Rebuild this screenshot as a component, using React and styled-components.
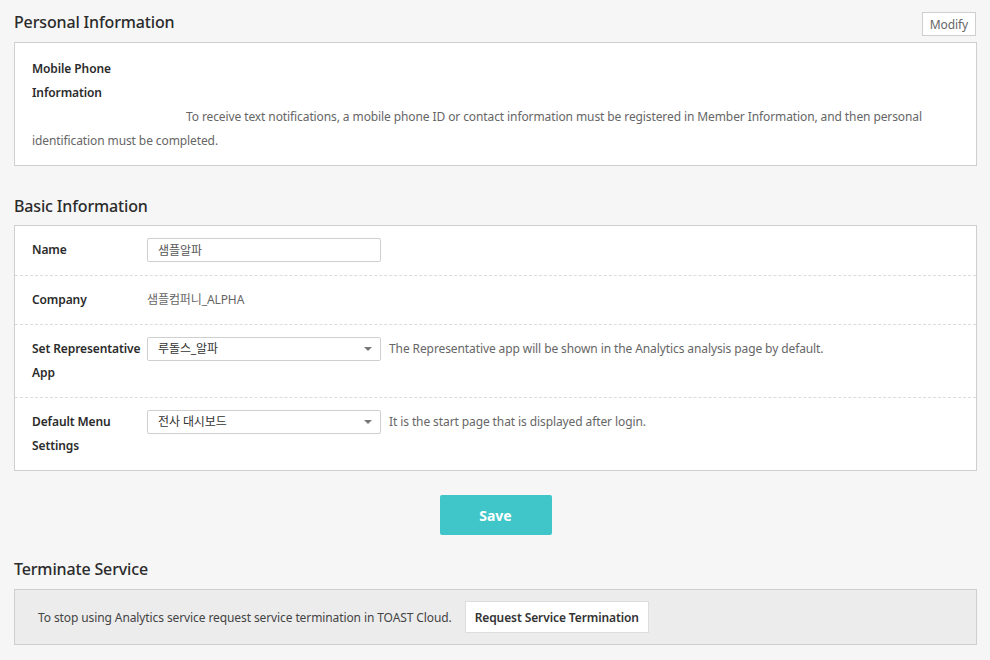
import React from "react";
import styled, { createGlobalStyle } from "styled-components";

const Global = createGlobalStyle`
  html, body { margin: 0; padding: 0; background: #f6f6f6; }
  body {
    font-family: "Noto Sans", "Noto Sans CJK KR", sans-serif;
    color: #333;
    font-size: 12px;
    letter-spacing: -0.1px;
  }
  * { box-sizing: border-box; }
`;

const Page = styled.div`
  width: 990px;
  height: 660px;
  padding: 0 13px 0 14px;
  overflow: hidden;
`;

const SectionHead = styled.div`
  display: flex;
  align-items: flex-end;
  justify-content: space-between;
  height: ${(p) => p.$h}px;
  padding-bottom: ${(p) => p.$pb}px;
`;

const Title = styled.h2`
  margin: 0;
  font-size: 16px;
  font-weight: 500;
  color: #2b2b2b;
  line-height: 20px;
  letter-spacing: -0.15px;
`;

const SmallButton = styled.button`
  height: 24px;
  padding: 0 7px;
  background: #fff;
  border: 1px solid #cfcfcf;
  color: #666;
  font-family: inherit;
  font-size: 12px;
  letter-spacing: -0.1px;
  margin-right: 1px;
  margin-bottom: -4px;
`;

const Panel = styled.div`
  background: ${(p) => p.$bg || "#fff"};
  border: 1px solid #cfcfcf;
`;

const InfoBody = styled.div`
  padding: 14px 17px 12px 17px;
  line-height: 24px;
`;

const InfoLabel = styled.div`
  font-weight: 600;
  color: #2b2b2b;
  width: 110px;
`;

const InfoText = styled.p`
  margin: 0;
  text-indent: 154px;
  color: #666;
`;

const Row = styled.div`
  display: flex;
  align-items: flex-start;
  min-height: ${(p) => p.$h}px;
  padding: ${(p) => p.$pt}px 17px 0;
  border-top: ${(p) => (p.$first ? "none" : "1px dashed #dcdcdc")};
  line-height: 24px;
`;

const Label = styled.div`
  width: 115px;
  flex: none;
  font-weight: 600;
  color: #2b2b2b;
`;

const Input = styled.input`
  width: 234px;
  height: 24px;
  border: 1px solid #cfcfcf;
  border-radius: 2px;
  padding: 0 10px;
  font-family: inherit;
  font-size: 12px;
  color: #555;
  background: #fff;
  outline: none;
`;

const Value = styled.div`
  color: #666;
`;

const Select = styled.div`
  width: 234px;
  height: 24px;
  border: 1px solid #cfcfcf;
  border-radius: 2px;
  padding: 0 10px;
  display: flex;
  align-items: center;
  justify-content: space-between;
  background: #fff;
  color: #333;
  flex: none;
`;

const Caret = styled.span`
  width: 0;
  height: 0;
  border-left: 4px solid transparent;
  border-right: 4px solid transparent;
  border-top: 4px solid #777;
  margin-right: -2px;
`;

const Help = styled.div`
  margin-left: 8px;
  color: #666;
`;

const SaveWrap = styled.div`
  display: flex;
  justify-content: center;
  padding: 24px 0 0;
`;

const SaveButton = styled.button`
  width: 112px;
  height: 40px;
  background: #40c6c9;
  border: none;
  border-radius: 2px;
  color: #fff;
  font-family: inherit;
  font-size: 14px;
  font-weight: 700;
`;

const TermBody = styled.div`
  display: flex;
  align-items: center;
  height: 54px;
  padding: 0 23px;
  color: #444;
`;

const TermButton = styled.button`
  margin-left: 13px;
  height: 32px;
  padding: 0 9px;
  background: #fff;
  border: 1px solid #ddd;
  font-family: inherit;
  font-size: 12px;
  font-weight: 600;
  letter-spacing: -0.1px;
  color: #333;
`;

export default function App() {
  return (
    <>
      <Global />
      <Page>
        <SectionHead $h={42} $pb={10}>
          <Title>Personal Information</Title>
          <SmallButton>Modify</SmallButton>
        </SectionHead>
        <Panel>
          <InfoBody>
            <InfoLabel>Mobile Phone Information</InfoLabel>
            <InfoText>
              To receive text notifications, a mobile phone ID or contact information must be
              registered in Member Information, and then personal identification must be completed.
            </InfoText>
          </InfoBody>
        </Panel>

        <SectionHead $h={59} $pb={9}>
          <Title>Basic Information</Title>
        </SectionHead>
        <Panel>
          <Row $first $h={49} $pt={12}>
            <Label>Name</Label>
            <Input defaultValue="샘플알파" />
          </Row>
          <Row $h={49} $pt={12}>
            <Label>Company</Label>
            <Value>샘플컴퍼니_ALPHA</Value>
          </Row>
          <Row $h={73} $pt={12}>
            <Label>Set Representative App</Label>
            <Select>
              루돌스_알파
              <Caret />
            </Select>
            <Help>The Representative app will be shown in the Analytics analysis page by default.</Help>
          </Row>
          <Row $h={73} $pt={12}>
            <Label>Default Menu Settings</Label>
            <Select>
              전사 대시보드
              <Caret />
            </Select>
            <Help>It is the start page that is displayed after login.</Help>
          </Row>
        </Panel>

        <SaveWrap>
          <SaveButton>Save</SaveButton>
        </SaveWrap>

        <SectionHead $h={54} $pb={10}>
          <Title>Terminate Service</Title>
        </SectionHead>
        <Panel $bg="#ececec">
          <TermBody>
            To stop using Analytics service request service termination in TOAST Cloud.
            <TermButton>Request Service Termination</TermButton>
          </TermBody>
        </Panel>
      </Page>
    </>
  );
}
